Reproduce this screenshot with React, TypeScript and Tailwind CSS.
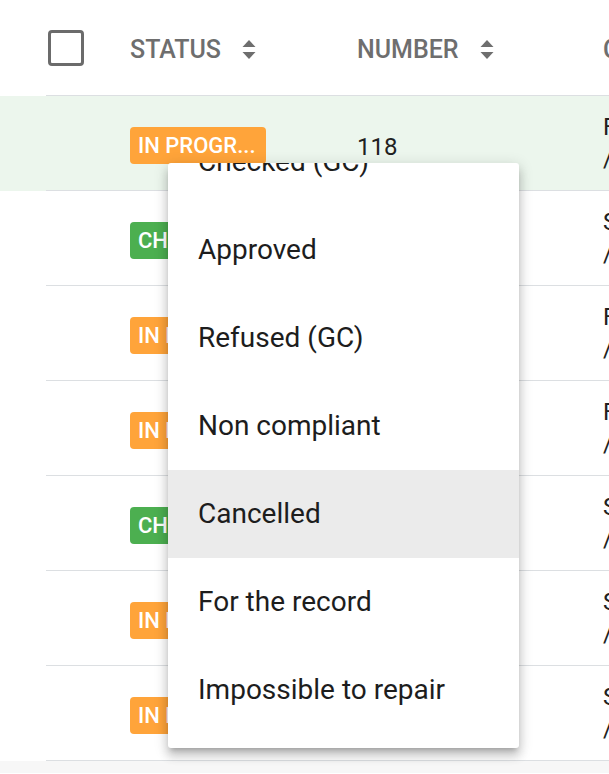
const rows = [
  { status: 'IN PROGR...', color: 'bg-[#ffa43a]', number: '118', l1: 'Fixture', l2: '/ 01/01', active: true },
  { status: 'CHECKED...', color: 'bg-[#4caf50]', number: '', l1: 'Shower', l2: '/ 01/01' },
  { status: 'IN PROGR...', color: 'bg-[#ffa43a]', number: '', l1: 'Floor', l2: '/ 01/01' },
  { status: 'IN PROGR...', color: 'bg-[#ffa43a]', number: '', l1: 'Floor', l2: '/ 01/01' },
  { status: 'CHECKED...', color: 'bg-[#4caf50]', number: '', l1: 'Shower', l2: '/ 01/01' },
  { status: 'IN PROGR...', color: 'bg-[#ffa43a]', number: '', l1: 'Sink', l2: '/ 01/01' },
  { status: 'IN PROGR...', color: 'bg-[#ffa43a]', number: '', l1: 'Sink', l2: '/ 01/01' },
];

const options = [
  'Checked (GC)',
  'Approved',
  'Refused (GC)',
  'Non compliant',
  'Cancelled',
  'For the record',
  'Impossible to repair',
];

function SortIcon() {
  return (
    <svg width="14" height="20" viewBox="0 0 14 20" className="ml-[21px] shrink-0">
      <path d="M7 0 L13.5 7 L0.5 7 Z" fill="#6e6e6e" />
      <path d="M0.5 12 L13.5 12 L7 19 Z" fill="#6e6e6e" />
    </svg>
  );
}

export default function App() {
  return (
    <div
      className="relative w-[609px] h-[774px] overflow-hidden bg-white"
      style={{ fontFamily: 'Roboto, "Liberation Sans", sans-serif' }}
    >
      {/* header */}
      <div className="h-[96px] pl-[46px]">
        <div className="flex h-full items-center border-b border-[#dcdfe2]">
          <div className="w-[84px] shrink-0 pl-[2px] pt-[1px]">
            <div className="w-[36px] h-[36px] rounded-[4px] border-[3.5px] border-[#6b6b6b]" />
          </div>
          <div className="w-[227px] shrink-0 pt-[4px] flex items-center text-[25px] font-medium text-[#6e6e6e]">
            STATUS
            <SortIcon />
          </div>
          <div className="w-[246px] shrink-0 pt-[4px] flex items-center text-[25px] font-medium text-[#6e6e6e]">
            NUMBER
            <SortIcon />
          </div>
          <div className="shrink-0 pt-[4px] whitespace-nowrap text-[25px] font-medium text-[#6e6e6e]">CREATED</div>
        </div>
      </div>

      {/* rows */}
      {rows.map((r, i) => (
        <div key={i} className={`h-[95px] pl-[46px] ${r.active ? 'bg-[#ecf6ed]' : 'bg-white'}`}>
          <div className="flex h-full items-center border-b border-[#dcdfe2]">
            <div className="w-[84px] shrink-0" />
            <div className="w-[227px] shrink-0 pt-[5px]">
              <div
                className={`${r.color} w-[136px] h-[37px] rounded-[4px] px-[8px] flex items-center overflow-hidden`}
              >
                <span className="text-white text-[22px] font-medium whitespace-nowrap overflow-hidden">
                  {r.status}
                </span>
              </div>
            </div>
            <div className="w-[246px] shrink-0 pt-[7px] text-[24px] text-[#212121]">{r.number}</div>
            <div className="shrink-0 flex flex-col text-[24px] leading-[32px] text-[#212121] whitespace-nowrap">
              <span>{r.l1}</span>
              <span>{r.l2}</span>
            </div>
          </div>
        </div>
      ))}

      <div className="h-[12px] bg-[#f7f7f7]" />

      {/* status dropdown menu */}
      <div className="absolute left-[168px] top-[163px] w-[351px] h-[585px] overflow-hidden rounded-[3px] bg-white shadow-[0_5px_5px_-3px_rgba(0,0,0,0.2),0_8px_10px_1px_rgba(0,0,0,0.14),0_3px_14px_2px_rgba(0,0,0,0.12)]">
        <div className="mt-[-45px]">
          {options.map((o) => (
            <div
              key={o}
              className={`h-[88px] flex items-center pl-[30px] text-[28px] text-[#1d1d1d] ${
                o === 'Cancelled' ? 'bg-[#ebebeb]' : ''
              }`}
            >
              {o}
            </div>
          ))}
        </div>
      </div>
    </div>
  );
}
